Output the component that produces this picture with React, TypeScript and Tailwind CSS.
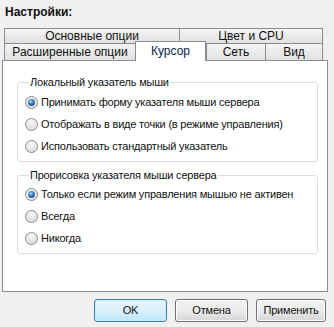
import React from 'react';

const Radio: React.FC<{ checked?: boolean }> = ({ checked }) => (
  <svg width="13" height="13" viewBox="0 0 13 13" className="shrink-0">
    <defs>
      <radialGradient id="rfill" cx="50%" cy="35%" r="65%">
        <stop offset="0%" stopColor="#fafafa" />
        <stop offset="100%" stopColor="#cfcfcf" />
      </radialGradient>
      <radialGradient id="rdot" cx="40%" cy="35%" r="70%">
        <stop offset="0%" stopColor="#b9e0fb" />
        <stop offset="45%" stopColor="#3f8bd2" />
        <stop offset="100%" stopColor="#163f78" />
      </radialGradient>
    </defs>
    <circle cx="6.5" cy="6.5" r="6" fill="url(#rfill)" stroke="#8a8a8a" strokeWidth="1" />
    <circle cx="6.5" cy="6.5" r="4.6" fill="none" stroke="#ffffff" strokeOpacity="0.7" strokeWidth="0.8" />
    {checked && <circle cx="6.5" cy="6.5" r="3.4" fill="url(#rdot)" />}
  </svg>
);

const Option: React.FC<{ label: string; checked?: boolean }> = ({ label, checked }) => (
  <div className="flex items-center h-[22px] gap-[3px] whitespace-nowrap">
    <Radio checked={checked} />
    <span>{label}</span>
  </div>
);

const Group: React.FC<{ title: string; children: React.ReactNode; className?: string }> = ({ title, children, className }) => (
  <fieldset className={`border border-[#d5dfe5] rounded-[3px] pl-[7px] pb-[4px] ${className ?? ''}`}>
    <legend className="ml-[4px] px-[1px] leading-[14px]">{title}</legend>
    {children}
  </fieldset>
);

const Tab: React.FC<{ label: string; w: string; last?: boolean }> = ({ label, w, last }) => (
  <div
    className={`${w} h-full flex items-center justify-center border-l border-t border-[#898c95] bg-gradient-to-b from-[#f4f4f4] to-[#e1e1e1] ${last ? 'border-r' : ''}`}
  >
    {label}
  </div>
);

export default function App() {
  return (
    <div
      className="w-[334px] h-[327px] bg-[#f0f0f0] text-[11px] tracking-[-0.2px] text-[#111] overflow-hidden"
      style={{ fontFamily: '"Liberation Sans", Arial, sans-serif' }}
    >
      {/* заголовок */}
      <div className="h-[28px] pl-[5px] pt-[5px] text-[12px] tracking-normal font-bold leading-[14px]">Настройки:</div>

      {/* вкладки */}
      <div className="ml-[4px] w-[319px] text-[12px] tracking-normal">
        <div className="flex h-[15px]">
          <Tab label="Основные опции" w="w-[175px]" />
          <Tab label="Цвет и CPU" w="w-[144px]" last />
        </div>
        <div className="flex h-[17px] items-end">
          <Tab label="Расширенные опции" w="w-[131px]" />
          <div className="relative z-10 w-[71px] h-[20px] -mb-[1px] flex items-center justify-center pb-[2px] bg-white border-l border-t border-r border-[#898c95] text-[#0a1e4a]">
            Курсор
          </div>
          <Tab label="Сеть" w="w-[59px]" />
          <Tab label="Вид" w="w-[58px]" last />
        </div>
      </div>

      {/* панель */}
      <div className="ml-[2px] w-[326px] h-[232px] bg-white border border-[#898c95] pt-[14px] px-[14px]">
        <Group title="Локальный указатель мыши" className="w-[301px] pt-[2px]">
          <Option label="Принимать форму указателя мыши сервера" checked />
          <Option label="Отображать в виде точки (в режиме управления)" />
          <Option label="Использовать стандартный указатель" />
        </Group>
        <Group title="Прорисовка указателя мыши сервера" className="w-[301px] mt-[6px] pt-[1px]">
          <Option label="Только если режим управления мышью не активен" checked />
          <Option label="Всегда" />
          <Option label="Никогда" />
        </Group>
      </div>

      {/* кнопки */}
      <div className="flex justify-end gap-[8px] pr-[8px] mt-[7px]">
        <button className="w-[73px] h-[23px] rounded-[3px] border border-[#3c7fb1] bg-gradient-to-b from-[#eaf6fd] via-[#d9f0fc] to-[#bee6fd] shadow-[inset_0_0_0_1px_#c8ecfd]">
          OK
        </button>
        <button className="w-[73px] h-[23px] rounded-[3px] border border-[#707070] bg-gradient-to-b from-[#f2f2f2] via-[#ebebeb] to-[#d5d5d5] shadow-[inset_0_0_0_1px_#fcfcfc]">
          Отмена
        </button>
        <button className="w-[70px] h-[23px] rounded-[3px] border border-[#707070] bg-gradient-to-b from-[#f2f2f2] via-[#ebebeb] to-[#d5d5d5] shadow-[inset_0_0_0_1px_#fcfcfc]">
          Применить
        </button>
      </div>
    </div>
  );
}
